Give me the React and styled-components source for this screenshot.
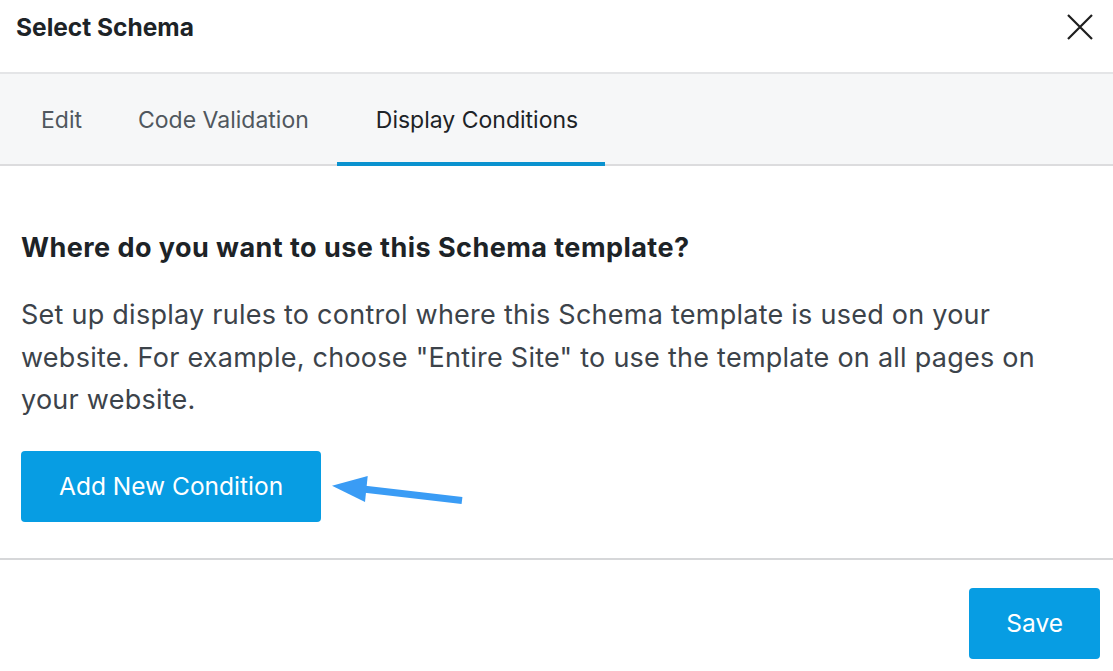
import React from 'react';
import styled, { createGlobalStyle } from 'styled-components';

const GlobalStyle = createGlobalStyle`
	html,
	body {
		margin: 0;
		padding: 0;
		background: #fff;
	}

	body {
		font-family: Inter, 'Liberation Sans', Arial, sans-serif;
		-webkit-font-smoothing: antialiased;
	}
`;

const Modal = styled.div`
	width: 1113px;
	height: 671px;
	display: flex;
	flex-direction: column;
	background: #fff;
	overflow: hidden;
`;

const Header = styled.header`
	height: 74px;
	box-sizing: border-box;
	display: flex;
	align-items: center;
	justify-content: space-between;
	padding: 0 17px 18px 16px;
	border-bottom: 2px solid #e4e5e7;

	h1 {
		margin: 0;
		font-size: 24.5px;
		line-height: 30px;
		font-weight: 700;
		color: #1d2327;
	}
`;

const CloseButton = styled.button`
	width: 32px;
	height: 32px;
	padding: 0;
	border: 0;
	background: none;
	display: flex;
	align-items: center;
	justify-content: center;
	cursor: pointer;
`;

const TabBar = styled.nav`
	height: 90px;
	display: flex;
	align-items: stretch;
	padding-left: 13px;
	background: #f6f7f8;
	border-bottom: 2px solid #dcdcde;
`;

const Tab = styled.button`
	display: flex;
	align-items: center;
	padding: 4px ${({ $active }) => ($active ? '27px 0 39px' : '28px 0')};
	margin-bottom: -2px;
	border: 0;
	border-bottom: 4px solid ${({ $active }) => ($active ? '#0a92cf' : 'transparent')};
	background: none;
	font-family: inherit;
	font-size: 23px;
	color: ${({ $active }) => ($active ? '#1d2327' : '#50575e')};
	cursor: pointer;
`;

const Body = styled.section`
	flex: 0 0 auto;
	padding: 67px 21px 36px;
	border-bottom: 2px solid #d6d7d9;

	h2 {
		margin: 0;
		font-size: 27px;
		line-height: 30px;
		letter-spacing: 0.45px;
		font-weight: 700;
		color: #1d2327;
	}

	p {
		margin: 31px 0 29px;
		max-width: 1022px;
		font-size: 27px;
		line-height: 42.5px;
		letter-spacing: 0.25px;
		color: #3c434a;
	}
`;

const ButtonRow = styled.div`
	position: relative;
	display: flex;
`;

const PrimaryButton = styled.button`
	height: 71px;
	padding: 0 ${({ $wide }) => ($wide ? '38px' : '37px')};
	border: 0;
	border-radius: 4px;
	background: #079de3;
	color: #fff;
	font-family: inherit;
	font-size: 24.5px;
	cursor: pointer;
`;

const Pointer = styled.svg`
	position: absolute;
	left: 304px;
	top: 19px;
	overflow: visible;
`;

const Footer = styled.footer`
	display: flex;
	justify-content: flex-end;
	padding: 28px 13px 0 0;
`;

export default function App() {
	return (
		<Modal>
			<GlobalStyle />
			<Header>
				<h1>Select Schema</h1>
				<CloseButton aria-label="Close">
					<svg width="26" height="26" viewBox="0 0 26 26">
						<path d="M1 1 L25 25 M25 1 L1 25" stroke="#1e1e1e" strokeWidth="2.2" fill="none" />
					</svg>
				</CloseButton>
			</Header>
			<TabBar>
				<Tab>Edit</Tab>
				<Tab>Code Validation</Tab>
				<Tab $active>Display Conditions</Tab>
			</TabBar>
			<Body>
				<h2>Where do you want to use this Schema template?</h2>
				<p>
					Set up display rules to control where this Schema template is used on your
					website. For example, choose "Entire Site" to use the template on all pages on
					your website.
				</p>
				<ButtonRow>
					<PrimaryButton $wide>Add New Condition</PrimaryButton>
					{/* annotation arrow pointing at the button */}
					<Pointer width="145" height="40" viewBox="0 0 145 40">
						<line x1="38" y1="19" x2="137" y2="30.5" stroke="#3a9cf5" strokeWidth="7" />
						<polygon points="7,15.7 42.7,6 40,32" fill="#3a9cf5" />
					</Pointer>
				</ButtonRow>
			</Body>
			<Footer>
				<PrimaryButton>Save</PrimaryButton>
			</Footer>
		</Modal>
	);
}
